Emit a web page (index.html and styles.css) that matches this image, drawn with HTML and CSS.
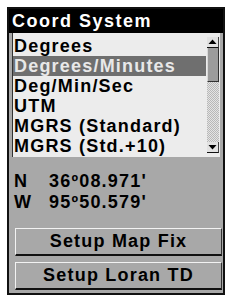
FILE: index.html
```html
<!DOCTYPE html>
<html>
<head>
<meta charset="utf-8">
<link rel="stylesheet" href="styles.css">
</head>
<body>
<div class="device">
  <div class="title">Coord System</div>
  <div class="list">
    <ul class="items">
      <li>Degrees</li>
      <li class="sel">Degrees/Minutes</li>
      <li>Deg/Min/Sec</li>
      <li>UTM</li>
      <li>MGRS (Standard)</li>
      <li>MGRS (Std.+10)</li>
    </ul>
    <div class="scrollbar">
      <div class="sb-btn"><svg width="11" height="10" viewBox="0 0 11 10"><polygon points="1.5,7 9.5,7 5.5,2.5" fill="#000"/></svg></div>
      <div class="thumb"></div>
      <div class="track"></div>
      <div class="sb-btn"><svg width="11" height="10" viewBox="0 0 11 10"><polygon points="1.5,3 9.5,3 5.5,7.5" fill="#000"/></svg></div>
    </div>
  </div>
  <div class="coords">
    <div class="coord"><span class="axis">N</span><span>36º08.971'</span></div>
    <div class="coord"><span class="axis">W</span><span>95º50.579'</span></div>
  </div>
  <div class="buttons">
    <div class="btn">Setup Map Fix</div>
    <div class="btn">Setup Loran TD</div>
  </div>
</div>
</body>
</html>
```

FILE: styles.css
```css
body {
  margin: 0;
  background: #fff;
  font-family: "Liberation Sans", Arial, sans-serif;
}
.device {
  margin: 7px 0 0 7px;
  width: 218px;
  height: 288px;
  box-sizing: border-box;
  border: 2px solid #111;
  background: #a8a8a8;
  display: flex;
  flex-direction: column;
  font-size: 18px;
  font-weight: bold;
  letter-spacing: 1.2px;
}
.title {
  height: 24px;
  line-height: 24px;
  background: #000;
  color: #fff;
  padding-left: 3px;
  letter-spacing: 1.5px;
  white-space: nowrap;
}
.list {
  margin: 0 3px;
  height: 124px;
  box-sizing: border-box;
  border-left: 1px solid #333;
  background: #ececec;
  display: flex;
}
.items {
  list-style: none;
  margin: 0;
  padding: 3px 0 0 0;
  width: 193px;
}
.items li {
  height: 20px;
  line-height: 20px;
  padding-left: 1px;
  color: #000;
  white-space: nowrap;
  overflow: hidden;
}
.items li.sel {
  background: #6f6f6f;
  color: #e8e8e8;
}
.scrollbar {
  margin: 4px 0 0 1px;
  width: 12px;
  height: 116px;
  display: flex;
  flex-direction: column;
}
.sb-btn {
  height: 11px;
  box-sizing: border-box;
  background: #e2e2e2;
  border-bottom: 1px solid #111;
  border-right: 1px solid #444;
  display: flex;
  align-items: center;
}
.sb-btn svg {
  display: block;
}
.thumb {
  height: 34px;
  box-sizing: border-box;
  background: #9c9c9c;
  border-left: 1px solid #d8d8d8;
  border-right: 1px solid #333;
  border-bottom: 1px solid #333;
}
.track {
  flex: 1;
  background: repeating-conic-gradient(#b8b8b8 0 25%, #e4e4e4 0 50%) 0 0 / 2px 2px;
}
.coords {
  margin-top: 14px;
  padding-left: 5px;
}
.coord {
  height: 21px;
  line-height: 21px;
  display: flex;
  color: #000;
  white-space: nowrap;
}
.axis {
  width: 35px;
}
.buttons {
  margin: 15px 0 0 6px;
  display: flex;
  flex-direction: column;
  gap: 6px;
}
.btn {
  width: 207px;
  height: 28px;
  box-sizing: border-box;
  border-top: 1px solid #f2f2f2;
  border-left: 1px solid #f2f2f2;
  border-bottom: 2px solid #111;
  border-right: 1px solid #333;
  line-height: 25px;
  text-align: center;
  color: #000;
  white-space: nowrap;
}
```
